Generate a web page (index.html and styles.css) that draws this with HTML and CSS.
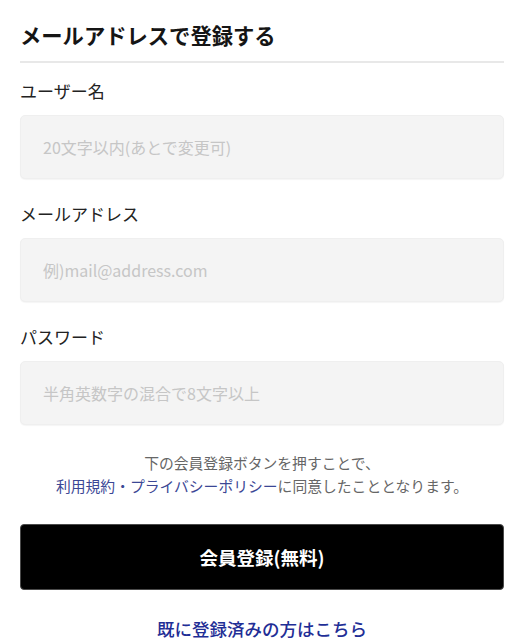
FILE: index.html
```html
<!DOCTYPE html>
<html lang="ja">
<head>
<meta charset="utf-8">
<link rel="stylesheet" href="styles.css">
</head>
<body>
<main class="page">
  <h1 class="title">メールアドレスで登録する</h1>
  <form class="form">
    <div class="field">
      <label class="label" for="name">ユーザー名</label>
      <input class="input" id="name" type="text" placeholder="20文字以内(あとで変更可)">
    </div>
    <div class="field">
      <label class="label" for="mail">メールアドレス</label>
      <input class="input" id="mail" type="email" placeholder="例)mail@address.com">
    </div>
    <div class="field">
      <label class="label" for="pass">パスワード</label>
      <input class="input" id="pass" type="password" placeholder="半角英数字の混合で8文字以上">
    </div>
    <p class="notice">下の会員登録ボタンを押すことで、<br><a class="notice-link" href="#">利用規約・プライバシーポリシー</a>に同意したこととなります。</p>
    <button class="submit" type="button">会員登録(無料)</button>
  </form>
  <p class="login"><a class="login-link" href="#">既に登録済みの方はこちら</a></p>
</main>
</body>
</html>
```

FILE: styles.css
```css
html, body {
  margin: 0;
  padding: 0;
  background: #ffffff;
}
body {
  font-family: "Noto Sans CJK JP", "Noto Sans", sans-serif;
  color: #111111;
}
.page {
  padding: 0 24px 0 20px;
}
.title {
  margin: 0;
  padding: 20px 0 11px;
  font-size: 21.3px;
  line-height: 30px;
  font-weight: 700;
  color: #151515;
  border-bottom: 2px solid #e8e8e8;
}
.form {
  display: flex;
  flex-direction: column;
  padding-top: 16px;
}
.field {
  display: flex;
  flex-direction: column;
  gap: 12px;
  margin-bottom: 23px;
}
.label {
  font-size: 17px;
  line-height: 24px;
  color: #222222;
}
.input {
  box-sizing: border-box;
  height: 64px;
  width: 100%;
  margin: 0;
  padding: 0 22px;
  background: #f4f4f4;
  border: 1px solid #efefef;
  border-radius: 5px;
  box-shadow: 0 1px 1px rgba(0,0,0,0.04);
  font-family: "Noto Sans CJK JP", "Noto Sans", sans-serif;
  font-size: 16px;
  color: #222222;
  outline: none;
}
.input::placeholder {
  color: #c6c6c6;
}
.notice {
  margin: 3px 0 0;
  text-align: center;
  font-size: 14.8px;
  line-height: 23px;
  color: #666666;
}
.notice-link {
  color: #3b4795;
  text-decoration: none;
}
.submit {
  box-sizing: border-box;
  margin-top: 27px;
  height: 66px;
  width: 100%;
  background: #000000;
  border: 1px solid #4a4a4a;
  border-radius: 4px;
  color: #ffffff;
  font-family: "Noto Sans CJK JP", "Noto Sans", sans-serif;
  font-size: 18.5px;
  font-weight: 700;
}
.login {
  margin: 27px 0 0;
  text-align: center;
  font-size: 17.5px;
  line-height: 24px;
  font-weight: 500;
}
.login-link {
  color: #1f2e96;
  text-decoration: none;
}
```
